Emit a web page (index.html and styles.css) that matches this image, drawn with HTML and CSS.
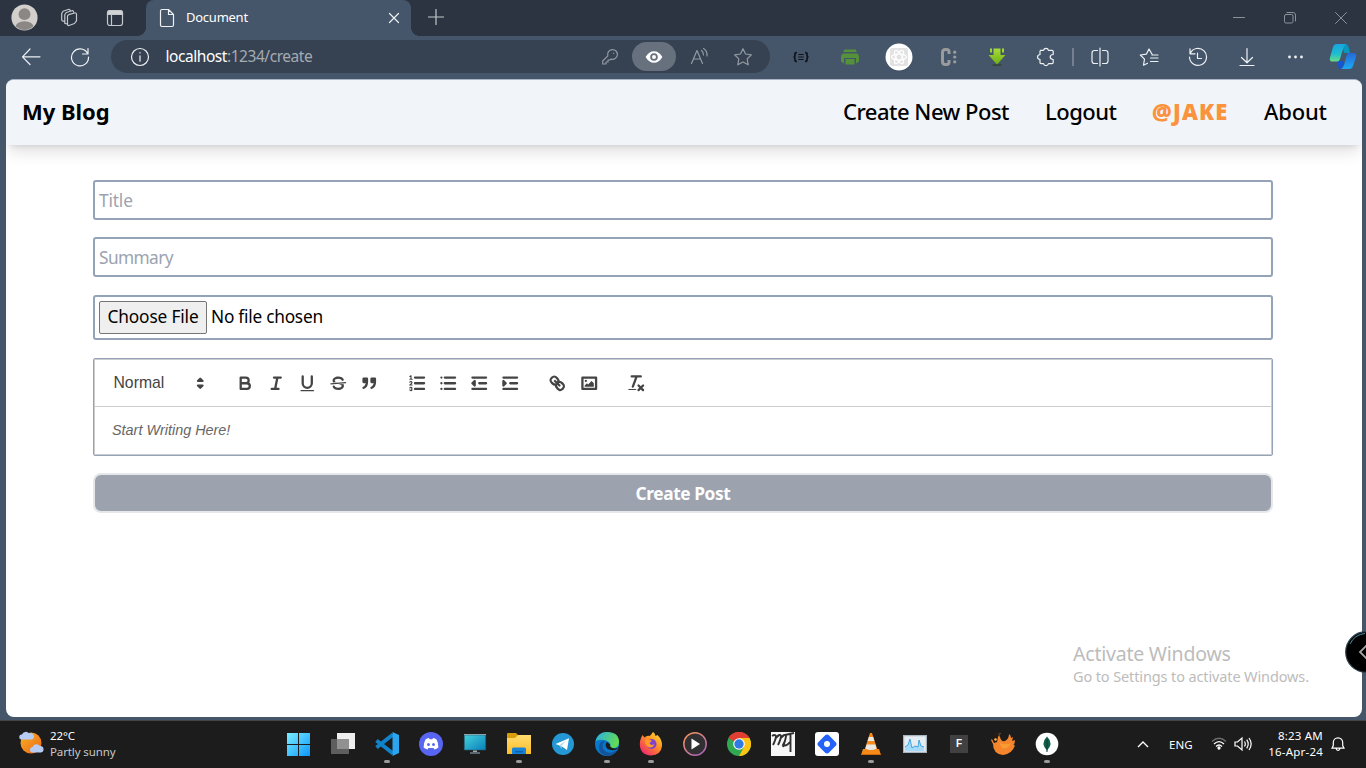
FILE: index.html
```html
<!DOCTYPE html>
<html lang="en">
<head>
<meta charset="utf-8">
<title>Document</title>
<link rel="stylesheet" href="styles.css">
</head>
<body>
<div class="screen">
  <header class="tabstrip">
    <div class="tab-tools">
      <svg class="avatar" viewBox="0 0 26 26"><defs><clipPath id="av"><circle cx="13" cy="13" r="12"/></clipPath></defs><circle cx="13" cy="13" r="12.6" fill="#d2cfcc"/><g clip-path="url(#av)" fill="#8b8784"><circle cx="13" cy="9.8" r="5.7"/><ellipse cx="13" cy="23" rx="9" ry="6.5"/></g></svg>
      <svg class="line dim i20" viewBox="0 0 20 20"><path d="M8.500 8.300q0-1.200 1.200-1.600l6-1.700q1.800-.4 1.800 1.300v6.500l-2 2.700-5.500 2q-1.500.3-1.500-1.300z"/><path d="M8.500 16l-2.700-.7V6.500l1.500-2 6.500-2 1 1.800M5.500 13.500l-2-.6q-.8-.4-.8-1.500V5.500L4 3.300l6-2 1.200 1"/></svg>
      <svg class="line dim i20" viewBox="0 0 20 20"><rect x="2.500" y="2.500" width="15" height="15" rx="2.500"/><path fill="#d0d2d4" d="M2.500 6.500V5q0-2.500 2.500-2.500h10q2.500 0 2.500 2.500v1.500z"/><path d="M6.500 7v10"/></svg>
    </div>
    <div class="tab">
      <svg class="line i20" viewBox="0 0 20 20"><path d="M5 1.500h6.500l5 5V17q0 1.500-1.500 1.500H5Q3.500 18.500 3.500 17V3Q3.500 1.500 5 1.500zM11.500 1.500v5h5"/></svg>
      <span class="tab-title">Document</span>
      <svg class="line tab-close" viewBox="0 0 12 12"><path d="M1.500 1.500l9 9m0-9l-9 9"/></svg>
    </div>
    <svg class="line dim newtab" viewBox="0 0 16 16"><path d="M8 .5v15M.5 8h15"/></svg>
    <div class="win-buttons">
      <svg class="line" viewBox="0 0 14 14"><path d="M1.500 6.500h11"/></svg>
      <svg class="line" viewBox="0 0 14 14"><rect x="1.500" y="3.500" width="8.500" height="8.500" rx="1.500"/><path d="M4 1.500h6q2.500 0 2.500 2.500v6"/></svg>
      <svg class="line" viewBox="0 0 14 14"><path d="M1.500 1.500l11 11m0-11l-11 11"/></svg>
    </div>
  </header>

  <div class="toolbar">
    <div class="nav-tools">
      <svg class="line i20" viewBox="0 0 20 20"><path d="M9 2L1.500 9.800 9 17.500M1.500 9.800H19"/></svg>
      <svg class="line i20" viewBox="0 0 20 20"><path d="M17.300 6A8.500 8.500 0 1 0 18.500 10M18 1.500V7h-5.500"/></svg>
    </div>
    <div class="address">
      <svg class="line i20" viewBox="0 0 20 20"><circle cx="10" cy="10" r="8.500"/><path d="M10 8.800v5.400M10 5.600v.4"/></svg>
      <span class="url">localhost<span class="path">:1234/create</span></span>
      <div class="address-tools">
        <svg class="line gray i20" viewBox="0 0 20 20"><path d="M7.800 8.800A4.900 4.900 0 1 1 11 12.100L9.800 13H8v2H6v2H2.700v-3zM13.500 6.300h.2"/></svg>
        <span class="eye"><svg viewBox="0 0 20 20"><path fill="#fff" fill-rule="evenodd" d="M1.600 10Q5 4.200 10 4.200T18.400 10Q15 15.800 10 15.800T1.600 10zM10 6.200a3.800 3.800 0 1 0 0 7.600 3.800 3.800 0 1 0 0-7.600zm0 1.800a2 2 0 1 1 0 4 2 2 0 1 1 0-4z"/></svg></span>
        <svg class="line gray i20" viewBox="0 0 20 20"><path d="M2.500 16.500L8 3.500l5.500 13M4.500 12h7M12.500 3.500q2 1.600 2 4.500M14.500 1.500q4 2.500 3.500 7.500"/></svg>
        <svg class="line gray i20" viewBox="0 0 20 20"><path d="M10 1.700l2.600 5.300 5.800.8-4.200 4.100 1 5.900-5.200-2.800-5.200 2.800 1-5.900-4.200-4.100 5.800-.8z"/></svg>
      </div>
    </div>
    <div class="tools">
      <svg class="i20" viewBox="0 0 20 20" fill="none" stroke="#10141a" stroke-width="1.700"><path d="M6 5.500q-2.500 0-2 2.500 0 2-1.500 2 1.500 0 1.500 2-.5 2.500 2 2.500M14 5.500q2.500 0 2 2.500 0 2 1.500 2-1.500 0-1.500 2 .5 2.500-2 2.500"/><path stroke-width="1.200" d="M7.300 7.500h5.400M7.300 10h5.400M7.300 12.500h5.400"/></svg>
      <svg class="i20" viewBox="0 0 20 20"><path fill="#55913b" d="M4.500 2.500h11q1 .5 1 2.500h-13q0-2 1-2.500zM3 6.500h14q2 1 2 3v5l-3 2V11H4v5.500l-3-2v-5q0-2 2-3zM5.500 12h9v5.500h-9z"/></svg>
      <svg class="react" viewBox="0 0 30 30"><circle cx="15" cy="15.800" r="13.500" fill="#36445a"/><circle cx="15" cy="15" r="13.500" fill="#fff"/><rect x="6" y="6" width="18" height="18" rx="2" fill="#e2e2e2"/><g fill="none" stroke="#fff" stroke-width="1.200"><ellipse cx="15" cy="15" rx="7.500" ry="3"/><ellipse cx="15" cy="15" rx="7.500" ry="3" transform="rotate(60 15 15)"/><ellipse cx="15" cy="15" rx="7.500" ry="3" transform="rotate(120 15 15)"/></g></svg>
      <svg class="i20" viewBox="0 0 20 20" fill="none" stroke="#9a9c9b" stroke-width="3"><path d="M11 7V5q0-2.500-2.500-2.500h-1Q4.500 2.500 4.500 5.500v9q0 3 3 3h1q2.500 0 2.500-2.500v-2"/><path stroke-width="3.200" stroke-linecap="round" d="M16.700 5.200h.1M16.700 10h.1M16.700 14.800h.1"/></svg>
      <svg class="i20" viewBox="0 0 20 20"><defs><linearGradient id="dl" x2="0" y2="1"><stop stop-color="#a6dc3a"/><stop offset="1" stop-color="#6fae12"/></linearGradient></defs><ellipse cx="10" cy="18" rx="5" ry="1" fill="#37463b"/><path fill="url(#dl)" d="M6.500 1.500h7V8h5L10 17.500 1.500 8h5zM3 1.500h2v4H3zM15 1.500h2v4h-2z"/></svg>
      <svg class="line i20" viewBox="0 0 20 20"><path d="M4.500 3.300h3q.5-2 2.500-2t2.500 2H16q1.200 0 1.200 1.200v3q-3 .2-3 2.500t3 2.500v3q0 1.200-1.200 1.200h-3.500q-.5 2-2.500 2t-2.500-2H5.200Q4 16.700 4 15.500v-3q-2.500-.5-2.500-2.500T4 7.500v-3q0-.7.500-1.200z"/></svg>
    </div>
    <span class="divider"></span>
    <div class="tools">
      <svg class="line i20" viewBox="0 0 20 20"><path d="M7.500 3.500h-3Q2 3.500 2 6v8q0 2.500 2.500 2.500h3M12.500 3.500h3Q18 3.500 18 6v8q0 2.500-2.500 2.500h-3M10 1v18"/></svg>
      <svg class="line i20" viewBox="0 0 20 20"><path d="M18 8h-4.500L10 2 7.300 7.200l-6 .8 4.200 4.200-1 6 4-2M11.500 11H19M11.500 14.500H19M13 8h6"/></svg>
      <svg class="line i20" viewBox="0 0 20 20"><path d="M2.200 6.500A8.500 8.500 0 1 1 1.500 10M2 1.800v5h5M9.500 6v5.500h4"/></svg>
      <svg class="line i20" viewBox="0 0 20 20"><path d="M10 1.500v14M4.500 10.500l5.500 5.300 5.500-5.300M3 18.500h14"/></svg>
      <svg class="i20" viewBox="0 0 20 20" fill="#f0f2f4"><circle cx="3.500" cy="10" r="1.400"/><circle cx="9.500" cy="10" r="1.400"/><circle cx="15.500" cy="10" r="1.400"/></svg>
    </div>
    <div class="copilot"><svg viewBox="0 0 28 28"><defs><linearGradient id="c1" x2="0" y2="1"><stop stop-color="#18a5e0"/><stop offset=".55" stop-color="#1dbcd0"/><stop offset="1" stop-color="#67dc88"/></linearGradient><linearGradient id="c2" x2="0" y2="1"><stop stop-color="#2369da"/><stop offset="1" stop-color="#20a9f3"/></linearGradient></defs><path fill="#1555ce" d="M8 18h7l-2 8h-2q-2-1-2-4z"/><path fill="#0797bd" d="M13 1h4q3 1 4 9h-6z"/><path fill="url(#c1)" d="M7.500 1H17q-2 1-3 5l-3 10q-.7 2.500-3 2.500H3q-3 0-2-4L4 4q1-3 3.500-3z"/><path fill="url(#c2)" d="M19 10h6q3 .5 2 4l-3 9q-1 3-4 3h-8q2-1 3-4l2.500-9q.5-2 1.500-3z"/></svg></div>
  </div>

  <main class="page">
    <nav class="site-nav">
      <span class="brand">My Blog</span>
      <div class="links"><span class="create">Create New Post</span><span class="logout">Logout</span><span class="user">@JAKE</span><span class="about">About</span></div>
    </nav>
    <form class="post-form">
      <div class="field title"><span class="hint t1">Title</span></div>
      <div class="field summary"><span class="hint t2">Summary</span></div>
      <div class="field file"><span class="choose"><span>Choose File</span></span><span class="nofile">No file chosen</span></div>
      <div class="editor">
        <div class="ql-bar">
          <span class="format">Normal</span>
          <svg class="ql picker" viewBox="0 0 18 18"><path class="f" d="M7 11l2 2 2-2zM7 7l2-2 2 2z"/></svg>
          <div class="group">
            <svg class="ql" viewBox="0 0 18 18"><path d="M5 4h4.500a2.500 2.500 0 0 1 0 5H5zM5 9h5.500a2.500 2.500 0 0 1 0 5H5z"/></svg>
            <svg class="ql" viewBox="0 0 18 18"><path d="M7 4h6M5 14h6M8 14l2-10"/></svg>
            <svg class="ql" viewBox="0 0 18 18"><path d="M5 3v6a4 4 0 0 0 8 0V3"/><rect class="s" x="3" y="15" width="12" height="1" rx=".5"/></svg>
            <svg class="ql" viewBox="0 0 18 18"><path class="thin" d="M15.500 8.500l-13 1"/><path class="s" d="M9.007 8C6.542 7.791 6 7.519 6 6.500 6 5.792 7.283 5 9 5c1.571 0 2.765.679 2.969 1.309a1 1 0 0 0 1.900-.617C13.356 4.106 11.354 3 9 3 6.200 3 4 4.538 4 6.500a3.200 3.200 0 0 0 .5 1.843zM8.984 10C11.457 10.208 12 10.479 12 11.500c0 .708-1.283 1.500-3 1.500-1.571 0-2.765-.679-2.969-1.309a1 1 0 1 0-1.900.617C4.644 13.894 6.646 15 9 15c2.800 0 5-1.538 5-3.500a3.200 3.200 0 0 0-.5-1.843z"/></svg>
            <svg class="ql" viewBox="0 0 18 18"><path class="f" d="M4 5h3v3H4zM11 5h3v3h-3zM7 8c0 4.031-3 5-3 5M14 8c0 4.031-3 5-3 5"/></svg>
          </div>
          <div class="group">
            <svg class="ql" viewBox="0 0 18 18"><path d="M7 4h8M7 9h8M7 14h8"/><path class="thin" d="M2.500 5.500h2M2.500 3l1-.5v3M4.500 10.500h-2c0-.234 1.850-1.076 1.850-2.234A.959.959 0 0 0 2.500 8.156M2.500 14.846a.959.959 0 0 0 1.850-.109.700.700 0 0 0-.6-.737.688.688 0 0 0 .6-.736.959.959 0 0 0-1.850-.109"/></svg>
            <svg class="ql" viewBox="0 0 18 18"><path d="M6 4h9M6 9h9M6 14h9M3 4h0M3 9h0M3 14h0"/></svg>
            <svg class="ql" viewBox="0 0 18 18"><path d="M3 14h12M3 4h12M9 9h6"/><path class="f" d="M5 7v4L3 9z"/></svg>
            <svg class="ql" viewBox="0 0 18 18"><path d="M3 14h12M3 4h12M9 9h6"/><path class="f" d="M3 7v4l2-2z"/></svg>
          </div>
          <div class="group">
            <svg class="ql" viewBox="0 0 18 18"><path d="M7 7l4 4M8.900 4.577a3.476 3.476 0 0 1 .36 4.679A3.476 3.476 0 0 1 4.577 8.900C3.185 7.500 2.035 6.400 4.217 4.217S7.500 3.185 8.900 4.577zM13.423 9.100a3.476 3.476 0 0 0-4.679-.36 3.476 3.476 0 0 0 .36 4.679c1.392 1.392 2.500 2.542 4.679.36S14.815 10.500 13.423 9.100z"/></svg>
            <svg class="ql" viewBox="0 0 18 18"><rect x="3" y="4" width="12" height="10"/><circle class="s" cx="6" cy="7" r="1"/><path class="s" d="M5 12v-1l2-2 1 1 3-3 2 2v3z"/></svg>
          </div>
          <div class="group">
            <svg class="ql" viewBox="0 0 18 18"><path d="M5 3h8M6 12l3.350-9M11 11l4 4M15 11l-4 4"/><rect class="s" x="2" y="14" width="7" height="1" rx=".5"/></svg>
          </div>
        </div>
        <div class="ql-body"><span>Start Writing Here!</span></div>
      </div>
      <div class="submit"><span>Create Post</span></div>
    </form>
    <div class="watermark"><div class="w1">Activate Windows</div><div class="w2">Go to Settings to activate Windows.</div></div>
  </main>
  <svg class="edge-knob" viewBox="0 0 42 42"><circle cx="21" cy="21" r="20.300" fill="#000" stroke="#31424d" stroke-width="1.200"/><path d="M5 13A18.500 18.500 0 0 1 20 2.500" fill="none" stroke="#4d8fa8" stroke-width="1"/><path d="M22 14l-7 7 7 7" fill="none" stroke="#a5a5a5" stroke-width="1.800"/></svg>

  <footer class="taskbar">
    <div class="weather">
      <svg viewBox="0 0 26 26"><defs><linearGradient id="sun" x2="1" y2="1"><stop stop-color="#f6b42a"/><stop offset="1" stop-color="#ee6412"/></linearGradient></defs><circle cx="13" cy="13" r="10.500" fill="url(#sun)"/><g fill="#b6ccf3"><path d="M3.500 9.500a2.500 2.500 0 0 1 .5-5 4 4 0 0 1 7-1 3 3 0 0 1 3 6zM14 22.500a2.800 2.800 0 0 1 .5-5.500 4.300 4.300 0 0 1 7.500-1 3.300 3.300 0 0 1 1 6.500z"/></g></svg>
      <div class="weather-text"><div class="temp">22°C</div><div class="sky">Partly sunny</div></div>
    </div>
    <div class="apps">
      <div class="app"><svg viewBox="0 0 24 24"><defs><linearGradient id="win" x2="24" y2="24" gradientUnits="userSpaceOnUse"><stop stop-color="#7df0ff"/><stop offset="1" stop-color="#0a95fb"/></linearGradient></defs><path fill="url(#win)" d="M0 1h11v11H0zM12 1h11v11H12zM0 13h11v11H0zM12 13h11v11H12z"/></svg></div>
      <div class="app"><svg viewBox="0 0 24 24"><path fill="#eee" d="M6 1h18v16H6z"/><path fill="#666" d="M0 7h18v15H0z" opacity=".9"/><path fill="#919191" d="M6 7h12v10H6z"/></svg></div>
      <div class="app run"><svg viewBox="0 0 24 24"><path d="M1.500 15.500L18 2.500M1.500 8.500L18 21.500" stroke="#1183cb" stroke-width="4"/><path fill="#2ba6ee" d="M17.500 0L24 3v18l-6.500 3z"/></svg></div>
      <div class="app"><svg viewBox="0 0 24 24"><circle cx="12" cy="12" r="12" fill="#5865f2"/><path fill="#fff" d="M6.500 7.500q1.500-1.200 3.500-1.400l.6 1.100h2.800l.6-1.100q2 .2 3.500 1.400 2 3.500 1.900 7.900-1.700 1.500-4 2.100l-.9-1.600h-5L8.600 17.500q-2.300-.6-4-2.100-.1-4.400 1.900-7.900z"/><ellipse cx="9.500" cy="12.500" rx="1.400" ry="1.600" fill="#5865f2"/><ellipse cx="14.500" cy="12.500" rx="1.400" ry="1.600" fill="#5865f2"/></svg></div>
      <div class="app"><svg viewBox="0 0 24 24"><defs><linearGradient id="pc" x2="1" y2="1"><stop stop-color="#45d1db"/><stop offset="1" stop-color="#087fbb"/></linearGradient></defs><path fill="#b7c2c8" d="M1 2h22v1H1z"/><path fill="url(#pc)" stroke="#295d70" stroke-width=".6" d="M1.300 3h21.400v15H1.300z"/><path fill="#a0a9ad" d="M10 18.500h4V20h-4z"/><path fill="#59666e" d="M7 20h10v2H7z"/></svg></div>
      <div class="app run"><svg viewBox="0 0 24 24"><defs><linearGradient id="fd" x2="0" y2="1"><stop stop-color="#ffdc70"/><stop offset="1" stop-color="#fdbd27"/></linearGradient></defs><path fill="#dc9b08" d="M0 2q0-1 1-1h8l2 2v4H0z"/><path fill="url(#fd)" d="M0 6h8l3-3h13v19H0z"/><path fill="#1684d9" d="M5 22v-5q0-1.500 1.500-1.500h11Q19 15.500 19 17v5z"/><path fill="#0a61ad" d="M8 19h8v1.500H8z"/></svg></div>
      <div class="app"><svg viewBox="0 0 24 24"><circle cx="12" cy="12" r="11" fill="#2398d5"/><path fill="#fff" d="M4.500 12l13.500-5.700L16 18l-5-3.500z"/><path fill="#b8d9ec" d="M8.500 13L15 8.800 10.500 14v3z"/></svg></div>
      <div class="app run"><svg viewBox="0 0 24 24"><defs><linearGradient id="eg" x2="1" y2=".4"><stop stop-color="#29aee8"/><stop offset="1" stop-color="#62db55"/></linearGradient></defs><circle cx="12" cy="12" r="12" fill="#0878ce"/><path fill="url(#eg)" d="M.5 9Q3 0 12 0q12 0 12 10 0 6-6 6h-4q3-3 0-6Q8 6 .5 9z"/><path fill="#14559a" d="M10 9q-5 5 0 10 5 4 12-1-4 6-10 6-9-2-8-10 1-5 6-5z"/><path fill="#1c1c1c" d="M12 10q-3 3 .5 7 4 2 9 .5l2-2q-4 2-7 0-2-1-1.500-3z"/></svg></div>
      <div class="app run"><svg viewBox="0 0 24 24"><defs><linearGradient id="ff" x1="1" x2=".2" y2="1"><stop stop-color="#ffeb3b"/><stop offset=".45" stop-color="#ff9422"/><stop offset="1" stop-color="#f02470"/></linearGradient></defs><path fill="url(#ff)" d="M2 6l1.500-3 2 2.500Q8 3 10.500 4 12 3 14 0q2 1 2.500 4l2-1q5 5 4.500 11-1 9-11 9.500Q1 23 .8 12q0-3 1.200-6z"/><circle cx="12.500" cy="12" r="5" fill="#8142d0"/><path fill="#ff9c26" d="M6 8q4-2 7 1-2 .5-2.500 2.500 2 2.500 5 .5-2 5-6.500 3Q6 13 6 8z"/></svg></div>
      <div class="app"><svg viewBox="0 0 24 24"><defs><linearGradient id="mp" x2=".8" y2="1"><stop stop-color="#f79854"/><stop offset="1" stop-color="#ae64bd"/></linearGradient></defs><circle cx="12" cy="12" r="11.200" fill="#303033" stroke="url(#mp)" stroke-width="1.500"/><path fill="#fff" d="M8.500 6.500L17 12l-8.500 5.500z"/></svg></div>
      <div class="app"><svg viewBox="0 0 24 24"><circle cx="12" cy="12" r="12" fill="#31a852"/><path fill="#df3e30" d="M12 12L1.600 6A12 12 0 0 1 22.400 6z"/><path fill="#fbc313" d="M12 12L12 6h10.400A12 12 0 0 1 12 24l5-9z"/><path fill="#df3e30" d="M1.600 6A12 12 0 0 1 22.400 6H12l-5 3z"/><circle cx="12" cy="12" r="5.800" fill="#fff"/><circle cx="12" cy="12" r="4.700" fill="#2f7ae5"/></svg></div>
      <div class="app"><svg viewBox="0 0 24 24"><path fill="#f7f7f7" d="M0 0h24v24H0z"/><path d="M1 4q3-2 4 0 0 3-3 9M5 6q4-5 5-2 0 3-3 9M10 6q4-5 5-2 0 2-3 11M14 3l9-2M19.500 2v18M14 9l-2 4q3 2 7-3" fill="none" stroke="#303030" stroke-width="1.900"/></svg></div>
      <div class="app"><svg viewBox="0 0 24 24"><rect width="24" height="24" rx="3" fill="#fff"/><rect x="4.500" y="4.500" width="15" height="15" rx="3" fill="#2463f7" transform="rotate(45 12 12)"/><circle cx="12" cy="12" r="3" fill="#fff"/></svg></div>
      <div class="app run"><svg viewBox="0 0 24 24"><path fill="#f58a16" d="M4 17h16l2 6H2z"/><path fill="#f38a1b" d="M11 1h2l5.500 17q-6.500 4-13 0z"/><path fill="#e8e8e5" d="M9.800 5h4.400l1.200 4H8.600zM7.600 12.500h8.800l1.200 4q-5.600 3-11.200 0z"/><path fill="#d36608" d="M2 22h20v1H2z"/></svg></div>
      <div class="app"><svg viewBox="0 0 24 24"><path fill="#e4edf3" stroke="#aab4bd" stroke-width="1.200" d="M.6 3.600h22.800v16.800H.6z"/><path fill="#a4dafa" d="M2 19v-4l3-2 2-6 2 9 3-2 3 1 1-7 2 6 3 1v4z"/><path fill="none" stroke="#2696d7" stroke-width=".8" d="M2 15l3-2 2-6 2 9 3-2 3 1 1-7 2 6 3 1"/></svg></div>
      <div class="app"><span class="f-app">F</span></div>
      <div class="app"><svg viewBox="0 0 24 24"><path fill="#f4852c" d="M2 6q2-5 8-5-3 2-1 4 1 5 5 4 4-2 4-7 2 1 2 4l2-1-1 4 3-1q0 3-1.500 5l1.500.5Q21 22 12 23 2 22 2 12L0 8z"/><path fill="#241a15" d="M.5 6Q4 1 9 1L7 5l-1 5-3 1z"/><circle cx="4.500" cy="7.500" r="1.300" fill="#f5b75b"/><path fill="#ffb13c" d="M8 10q6 4 12 1-3 7-9 5z" opacity=".5"/></svg></div>
      <div class="app run"><svg viewBox="0 0 24 24"><circle cx="12" cy="12" r="11.300" fill="#fff"/><path fill="#116149" d="M12 4.500q7 7 0 14-7-7 0-14z"/><path stroke="#0b3d35" d="M12 7v13"/></svg></div>
    </div>
    <div class="tray">
      <svg class="chev" viewBox="0 0 14 14" fill="none" stroke="#fff" stroke-width="1.400"><path d="M2 10l5-5 5 5"/></svg>
      <span class="lang">ENG</span>
      <svg class="wifi" viewBox="0 0 16 16" fill="none" stroke="#fff" stroke-width="1.300"><path stroke="#6c6c6c" d="M1 6.500q7-6.500 14 0"/><path d="M3 9q5-4.800 10 0M5 11.500q3-3 6 0"/><circle cx="8" cy="13" r="1" fill="#fff"/></svg>
      <svg class="vol" viewBox="0 0 18 16" fill="none" stroke="#fff" stroke-width="1.200"><path d="M1 6h2.500L8 2v12l-4.500-4H1zM10.500 5.500q1.600 2.500 0 5M12.700 3.700q3 4.300 0 8.600M15 2q4.300 6 0 12"/></svg>
      <div class="clock"><div class="time">8:23 AM</div><div class="date">16-Apr-24</div></div>
      <svg class="bell" viewBox="0 0 16 16" fill="none" stroke="#fff" stroke-width="1.200"><path d="M2 12.200l1.300-2.700V6.500a4.700 4.700 0 0 1 9.400 0v3l1.300 2.700zM6 12.500q2 4 4 0"/></svg>
    </div>
  </footer>
</div>
</body>
</html>
```
FILE: styles.css
```css
* { box-sizing: border-box; }
body { margin: 0; font-family: "Noto Sans", "Open Sans", sans-serif; }
svg { display: block; flex: none; }
span, .watermark div, .weather div, .clock div { white-space: nowrap; }
.screen { position: relative; width: 1366px; height: 768px; display: flex; flex-direction: column; overflow: hidden; background: #45556a; }
.line { fill: none; stroke: #eef1f4; stroke-width: 1.2; stroke-linecap: round; stroke-linejoin: round; }
.dim { stroke: #c4c8cc; }
.gray { stroke: #929aa3; }
.i20 { width: 20px; height: 20px; }

.tabstrip { height: 36px; display: flex; background: #2b3440; flex: none; }
.tab-tools { width: 146px; display: flex; align-items: center; padding: 0 0 1px 11px; background: radial-gradient(circle at 0 0, transparent 7.5px, #45556a 8px) right bottom / 8px 8px no-repeat; }
.tab-tools .avatar { width: 27px; height: 27px; margin-right: 21px; }
.tab-tools .i20 { margin-right: 26px; }
.tab { width: 265px; display: flex; align-items: center; padding: 0 11px 1px 11px; background: #45556a; border-radius: 8px 8px 0 0; color: #fff; }
.tab-title { margin: -1px 0 0 9px; font-size: 13px; letter-spacing: -.25px; }
.tab-close { width: 12px; height: 12px; margin-left: auto; }
.newtab { width: 41px; height: 36px; padding: 9px 8px 11px 17px; background: radial-gradient(circle at 8px 0, transparent 7.5px, #45556a 8px) left bottom / 8px 8px no-repeat; }
.win-buttons { margin-left: auto; display: flex; gap: 37px; padding: 11px 18px 0 0; }
.win-buttons svg { width: 14px; height: 14px; stroke: #8b9198; stroke-width: 1; }

.toolbar { height: 43px; display: flex; align-items: center; flex: none; background: #45556a; padding-bottom: 2px; }
.nav-tools { width: 111px; display: flex; gap: 29px; padding-left: 21px; }
.address { width: 659px; height: 33px; border-radius: 17px; background: #364252; display: flex; align-items: center; padding: 0 17px 0 19px; }
.url { margin: -1px 0 0 15.5px; font-size: 15.5px; color: #fff; letter-spacing: -.45px; }
.path { color: #a4abb3; }
.address-tools { margin-left: auto; display: flex; align-items: center; gap: 12.5px; }
.address-tools .gray:last-child { margin-left: 12px; }
.eye { width: 44px; height: 29px; border-radius: 15px; background: #67717e; display: flex; align-items: center; justify-content: center; }
.eye svg { width: 20px; height: 20px; }
.tools { display: grid; grid-auto-flow: column; grid-auto-columns: 49px; place-items: center; }
.address + .tools { margin-left: 6.5px; }
.react { width: 30px; height: 30px; }
.divider { width: 2px; height: 18px; margin: 0 1.5px; background: #748091; }
.copilot { width: 44px; display: flex; justify-content: center; }
.copilot svg { width: 28px; height: 28px; }

.page { position: relative; height: 638px; margin: 0 4px 0 6px; flex: none; background: #fff; border-radius: 8px; overflow: hidden; border-top: 1px solid #a8b4c6; }
.site-nav { height: 65px; display: flex; align-items: center; justify-content: space-between; padding: 0 35px 4px 16px; background: #f1f5f9; box-shadow: 0 10px 15px -3px rgba(0,0,0,.12), 0 4px 6px -4px rgba(0,0,0,.14); font-size: 22px; color: #000; font-weight: 500; }
.brand { font-weight: 700; letter-spacing: -.05px; }
.links { display: flex; gap: 36px; }
.create { width: 166px; letter-spacing: -.5px; }
.logout { width: 71px; letter-spacing: -.5px; }
.user { width: 76px; font-weight: 900; color: #fb923c; letter-spacing: 1.2px; }
.about { width: 63px; letter-spacing: -.2px; }

.post-form { width: 1180px; margin: 35px 0 0 87px; }
.field { height: 40px; border: 2px solid #94a3b8; border-radius: 3px; display: flex; align-items: center; padding-left: 4px; font-size: 17.3px; letter-spacing: -.15px; }
.hint { color: #9ca3af; }
.t2 { letter-spacing: -.6px; }
.summary { margin-top: 17px; }
.file { height: 45px; margin-top: 18px; color: #000; line-height: 22px; }
.choose { width: 108px; height: 33px; border: 1px solid #767676; border-radius: 2px; background: #efefef; display: flex; align-items: center; justify-content: center; padding-bottom: 1px; }
.nofile { margin: -1px 0 0 4px; letter-spacing: -.25px; }
.editor { height: 98px; margin-top: 18px; border: 1px solid #94a3b8; border-radius: 2px; box-shadow: inset 0 0 0 1px #ccc; }
.ql-bar { height: 48px; display: flex; align-items: center; border-bottom: 1px solid #ccc; font-family: "Liberation Sans", sans-serif; font-size: 15.75px; color: #444; padding: 1px 0 0 19.5px; }
.format { width: 76.5px; margin-top: -1px; }
.ql { width: 20.5px; height: 20.5px; fill: none; stroke: #444; stroke-width: 2; stroke-linecap: round; stroke-linejoin: round; }
.ql .f { fill: #444; }
.ql .s { fill: #444; stroke: none; }
.ql .thin { stroke-width: 1; }
.group { display: flex; gap: 10.6px; margin-left: 27px; }
.picker + .group { margin-left: 24.3px; }
.ql-body { height: 48px; display: flex; align-items: center; padding: 0 0 2px 18px; font: italic 14.4px "Liberation Sans", sans-serif; color: #666; }
.submit { height: 40px; margin-top: 17px; border: 2px solid #e5e7eb; border-radius: 8px; background: #9ca3af; color: #fff; font-size: 17.3px; letter-spacing: -.4px; font-weight: 700; display: flex; align-items: center; justify-content: center; }
.watermark { position: absolute; left: 1067px; top: 560px; color: #bcbcbc; }
.w1 { font-size: 19.5px; line-height: 27px; letter-spacing: -.22px; }
.w2 { font-size: 14.5px; line-height: 19px; letter-spacing: -.12px; }
.edge-knob { position: absolute; left: 1345px; top: 631px; width: 42px; height: 42px; }

.taskbar { height: 48px; margin-top: 3px; flex: none; display: flex; background: #1c1c1c; border-top: 1px solid #444; color: #fff; }
.weather { width: 277px; display: flex; padding: 9px 0 0 18px; gap: 6px; font-size: 11.5px; line-height: 16px; letter-spacing: -.12px; }
.weather svg { width: 26px; height: 26px; }
.weather-text { margin-top: -2px; }
.weather .sky { color: #c8c8c8; }
.apps { display: grid; grid-auto-flow: column; grid-auto-columns: 44px; }
.app { display: flex; flex-direction: column; align-items: center; padding-top: 11px; }
.app svg { width: 24px; height: 24px; }
.run::after { content: ""; width: 6px; height: 3px; margin-top: 4px; border-radius: 2px; background: #9a9a9a; }
.f-app { width: 18px; height: 18px; margin-top: 3px; background: #414141; font: 700 10px/18px "Liberation Sans", sans-serif; text-align: center; }
.tray { flex: 1; display: flex; font-size: 11.5px; line-height: 16px; padding-left: 67px; }
.chev { width: 14px; height: 14px; margin-top: 16px; }
.lang { width: 25px; margin: 16px 0 0 19px; }
.wifi { width: 16px; height: 16px; margin: 14px 0 0 17px; }
.vol { width: 18px; height: 16px; margin: 15px 0 0 7px; }
.clock { width: 71px; padding-top: 7px; text-align: right; letter-spacing: .22px; }
.bell { width: 16px; height: 16px; margin: 15px 0 0 7px; }
```
